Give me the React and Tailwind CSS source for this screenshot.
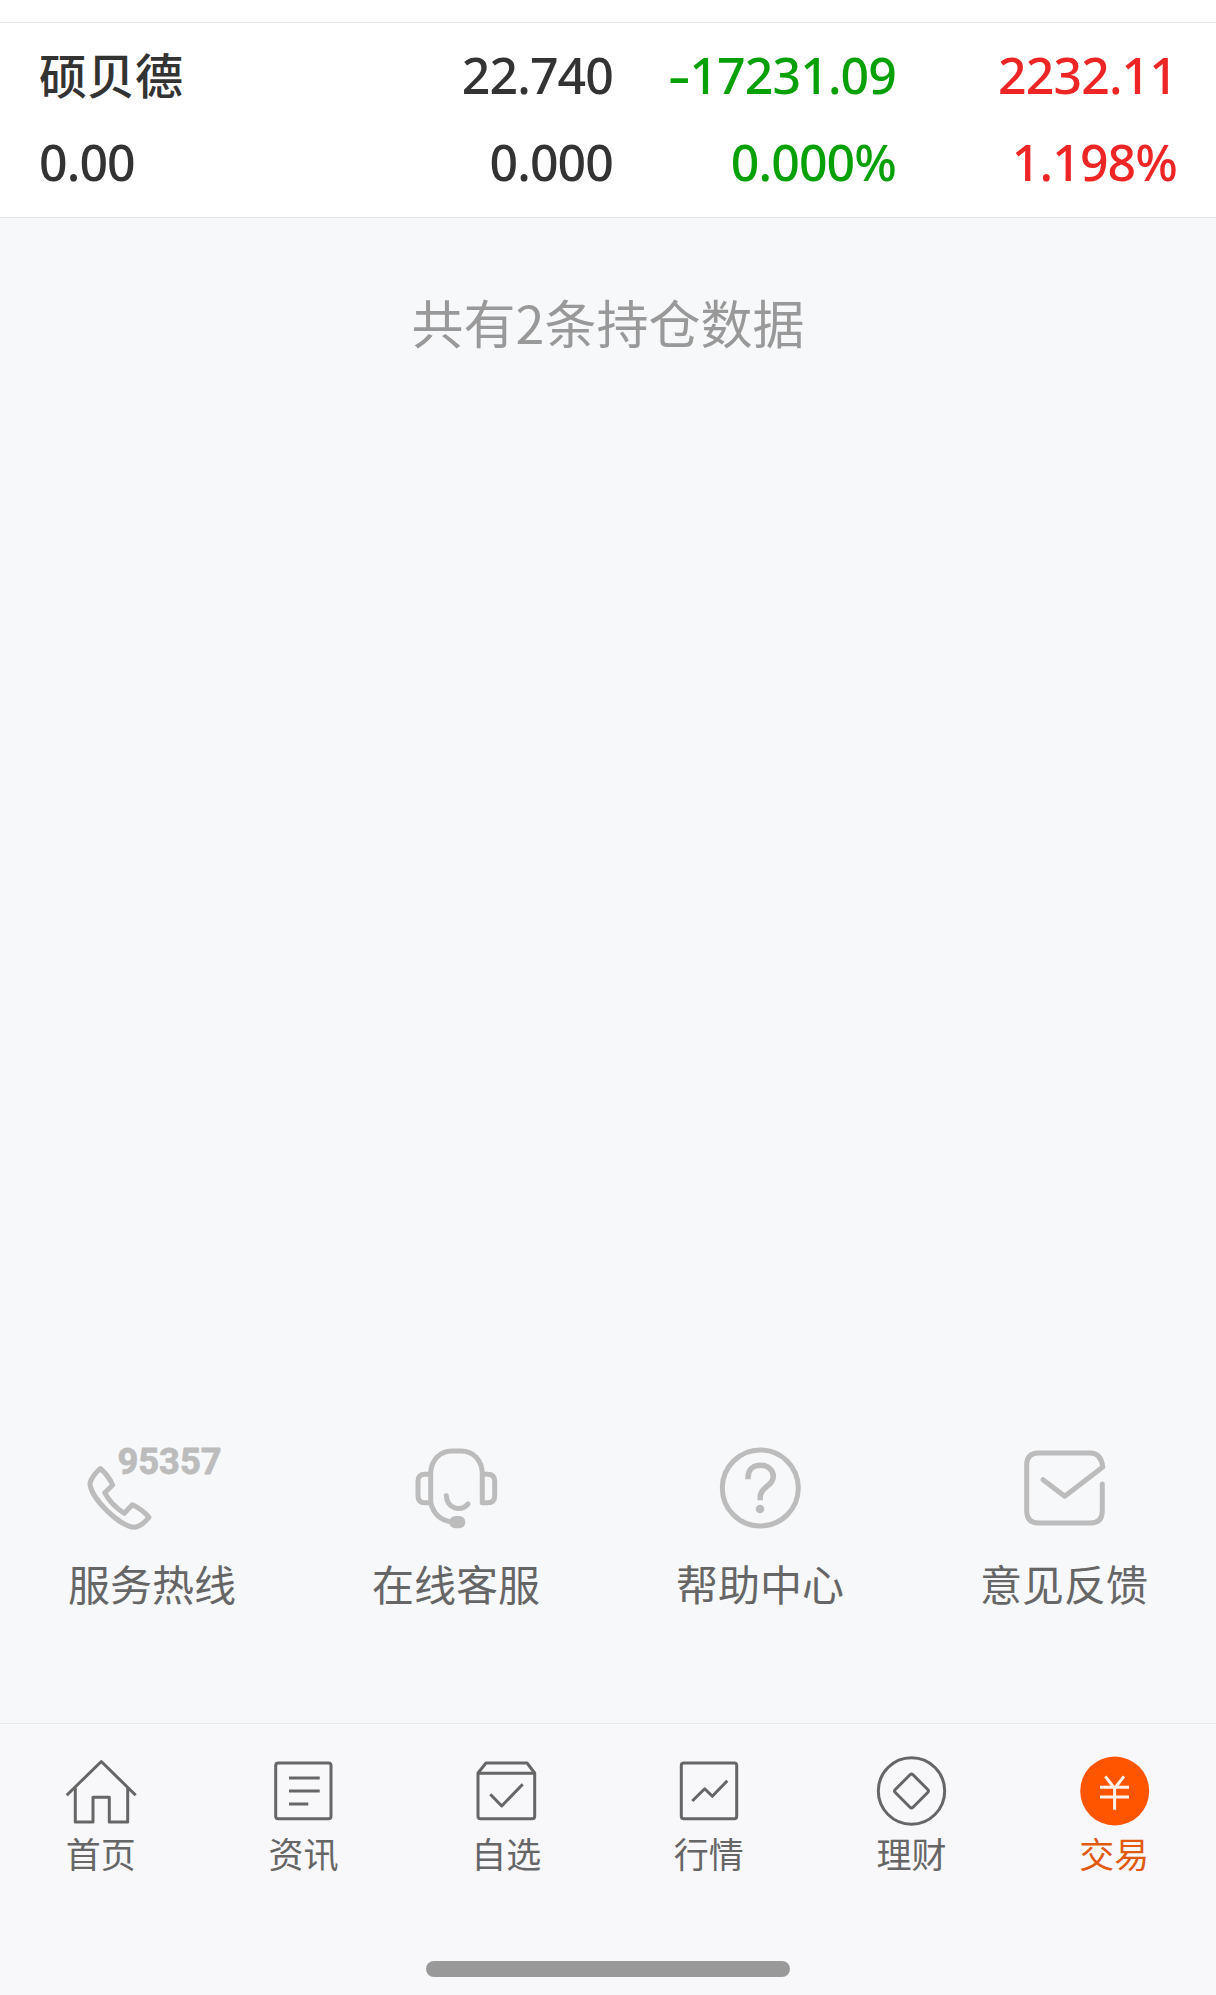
const services = [
  { label: '服务热线', icon: <HotlineIcon /> },
  { label: '在线客服', icon: <HeadsetIcon /> },
  { label: '帮助中心', icon: <HelpIcon /> },
  { label: '意见反馈', icon: <FeedbackIcon /> },
];

const tabs = [
  { label: '首页', icon: <HomeIcon /> },
  { label: '资讯', icon: <NewsIcon /> },
  { label: '自选', icon: <WatchlistIcon /> },
  { label: '行情', icon: <MarketIcon /> },
  { label: '理财', icon: <WealthIcon /> },
  { label: '交易', icon: <TradeIcon />, active: true },
];

const App = () => {
  return (
    <div className="flex h-[1995px] w-[1216px] flex-col overflow-hidden bg-[#f7f8fa] font-['Noto_Sans_CJK_SC',sans-serif]">
      {/* Holding row */}
      <div className="h-[22px] shrink-0 bg-white" />
      <div className="h-[196px] shrink-0 border-y border-[#e5e5e5] bg-white pl-[39px] pt-2 font-['Noto_Sans','Noto_Sans_CJK_SC',sans-serif] text-[50px] font-medium tracking-[-0.9px] text-[#333333]">
        <div className="grid h-[87px] grid-cols-[292px_282px_283px_281px] items-center whitespace-nowrap leading-none">
          <span className="pb-[3px] font-['Noto_Sans_CJK_SC',sans-serif] text-[48px] tracking-normal">硕贝德</span>
          <span className="text-right">22.740</span>
          <span className="text-right text-[#07a007]">
            <span className="mr-[3px] inline-block scale-x-140">-</span>17231.09
          </span>
          <span className="text-right text-[#ee2525]">2232.11</span>
        </div>
        <div className="grid h-[87px] grid-cols-[292px_282px_283px_281px] items-center whitespace-nowrap leading-none">
          <span>0.00</span>
          <span className="text-right">0.000</span>
          <span className="text-right text-[#07a007]">0.000%</span>
          <span className="text-right text-[#ee2525]">1.198%</span>
        </div>
      </div>

      <p className="mt-[66px] text-center text-[52px] leading-[76px] text-[#999999]">共有2条持仓数据</p>

      {/* Service shortcuts */}
      <div className="mt-auto grid h-[283px] shrink-0 grid-cols-4">
        {services.map((item) => (
          <div key={item.label} className="flex flex-col items-center">
            {item.icon}
            <span className="mt-[17px] text-[42px] leading-[60px] text-[#666666]">{item.label}</span>
          </div>
        ))}
      </div>

      {/* Bottom tab bar */}
      <div className="h-[272px] shrink-0 border-t border-[#e8e9eb] bg-[#f8f8fb]">
        <div className="grid h-[237px] grid-cols-6 pt-[31px]">
          {tabs.map((tab) => (
            <div key={tab.label} className="flex flex-col items-center">
              {tab.icon}
              <span className={tab.active ? 'pr-px text-[35px] leading-[52px] text-[#e05a12]' : 'pr-px text-[35px] leading-[52px] text-[#666666]'}>
                {tab.label}
              </span>
            </div>
          ))}
        </div>
        <div className="mx-auto h-4 w-[364px] rounded-full bg-[#999999]" />
      </div>
    </div>
  );
};

function ServiceIcon({ children }) {
  return (
    <svg width="160" height="96" viewBox="0 0 160 96" fill="none" stroke="#bcbcbc" strokeWidth="5" strokeLinecap="round" strokeLinejoin="round">
      {children}
    </svg>
  );
}

function HotlineIcon() {
  return (
    <ServiceIcon>
      <path d="M28.3 28.5Q36 35 40.7 45L32.7 52.7Q39 65 52.3 73.3L60.3 64.7Q70 69 77 77.3Q70 86 63 87.3C48 87 18 58 18 43Q20 36 28.3 28.5Z" />
      <text x="45.5" y="33.5" textLength="104" lengthAdjust="spacingAndGlyphs" fill="#bcbcbc" stroke="#bcbcbc" strokeWidth="0.8" className="font-['Roboto',sans-serif] text-[36px] font-bold">
        95357
      </text>
    </ServiceIcon>
  );
}

function HeadsetIcon() {
  return (
    <ServiceIcon>
      <path d="M54.7 34.3V62.7H49Q42 62.7 42 55.7V41.3Q42 34.3 49 34.3H54.7C54.7 20 64 11 76 11H85C97 11 106.3 20 106.3 34.3V62.7H111.7Q118.7 62.7 118.7 55.7V41.3Q118.7 34.3 111.7 34.3H106.3" />
      <path d="M54.7 62.7Q59 80 76 82" />
      <path d="M70.3 55.7C71 69 85 72 92 64" />
      <rect x="73.3" y="76" width="16" height="12.3" rx="6" fill="#bcbcbc" stroke="none" />
    </ServiceIcon>
  );
}

function HelpIcon() {
  return (
    <ServiceIcon>
      <circle cx="80.3" cy="48" r="38" />
      <path strokeLinecap="butt" strokeWidth="5.5" d="M68 39.3V37.5C68 29.5 73 25.3 80.7 25.3C88 25.3 93.3 30 93.3 36.5C93.3 46 80.2 47 80.2 57V60.3" />
      <circle cx="80" cy="69" r="4.3" fill="#bcbcbc" stroke="none" />
    </ServiceIcon>
  );
}

function FeedbackIcon() {
  return (
    <ServiceIcon>
      <path d="M118.3 44V71Q118.3 83 106.3 83H54.7Q42.7 83 42.7 71V25Q42.7 13 54.7 13H106.3Q117 13 118.8 27L80.7 56.3L59 39.7" />
    </ServiceIcon>
  );
}

function TabIcon({ children }) {
  return (
    <svg width="72" height="72" viewBox="0 0 72 72" fill="none" stroke="#666666" strokeWidth="3" strokeLinejoin="round">
      {children}
    </svg>
  );
}

function HomeIcon() {
  return (
    <TabIcon>
      <path d="M1.7 40.3L36.3 6.5L70.7 40.3" />
      <path d="M10.3 33V67H28V42.3H44.3V67H62.7V33" />
    </TabIcon>
  );
}

function NewsIcon() {
  return (
    <TabIcon>
      <rect x="7.7" y="8" width="55.3" height="55.7" rx="2.5" />
      <path d="M21 23H51.7M21 36H51.7M21 49H40.3" />
    </TabIcon>
  );
}

function WatchlistIcon() {
  return (
    <TabIcon>
      <path d="M7 18V61.2Q7 63.7 9.5 63.7H61.2Q63.7 63.7 63.7 61.2V18L56 8H15L7 18ZM7 18.3H63.7" />
      <path d="M19.3 39.2L30.7 51L51.7 29.3" />
    </TabIcon>
  );
}

function MarketIcon() {
  return (
    <TabIcon>
      <rect x="8.3" y="8" width="55.4" height="55.7" rx="2.5" />
      <path d="M19.3 46L31.7 33.8L39.3 41.3L54.3 25.7" />
    </TabIcon>
  );
}

function WealthIcon() {
  return (
    <TabIcon>
      <circle cx="35.5" cy="36" r="33.2" />
      <path d="M34 19.8Q35.5 18.3 37 19.8L51.7 34.5Q53.2 36 51.7 37.5L37 52.2Q35.5 53.7 34 52.2L19.3 37.5Q17.8 36 19.3 34.5Z" />
    </TabIcon>
  );
}

function TradeIcon() {
  return (
    <TabIcon>
      <circle cx="35.7" cy="36" r="34.5" fill="#ff5500" stroke="none" />
      <path stroke="#fff2ea" d="M26.3 21.3L35.6 33.5L45 21.3M35.6 33V54.7M21 32.3H50M21 42H50" />
    </TabIcon>
  );
}

export default App;
